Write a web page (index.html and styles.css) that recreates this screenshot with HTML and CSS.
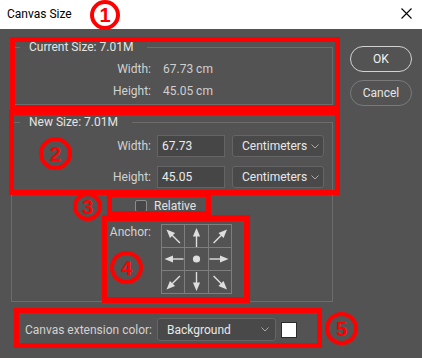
FILE: index.html
```html
<!DOCTYPE html>
<html>
<head>
<meta charset="utf-8">
<link rel="stylesheet" href="styles.css">
</head>
<body>
<div class="dialog">
  <header class="titlebar">
    <span class="title">Canvas Size</span>
    <svg class="close" width="11" height="11" viewBox="0 0 11 11"><path d="M0.5 0.5 L10.5 10.5 M10.5 0.5 L0.5 10.5" stroke="#000" stroke-width="1.1" fill="none"/></svg>
  </header>
  <main class="body">
    <div class="left">
      <fieldset class="group current">
        <legend>Current Size: 7.01M</legend>
        <div class="row"><span class="label">Width:</span><span class="value">67.73 cm</span></div>
        <div class="row"><span class="label">Height:</span><span class="value">45.05 cm</span></div>
      </fieldset>
      <fieldset class="group newsize">
        <legend>New Size: 7.01M</legend>
        <div class="row ctrl">
          <span class="label">Width:</span>
          <div class="input">67.73</div>
          <div class="select units"><span>Centimeters</span><svg class="chev" width="8" height="5" viewBox="0 0 8 5"><path d="M0.5 0.5 L4 4 L7.5 0.5" stroke="#a8a8a8" stroke-width="1" fill="none"/></svg></div>
        </div>
        <div class="row ctrl second">
          <span class="label">Height:</span>
          <div class="input">45.05</div>
          <div class="select units"><span>Centimeters</span><svg class="chev" width="8" height="5" viewBox="0 0 8 5"><path d="M0.5 0.5 L4 4 L7.5 0.5" stroke="#a8a8a8" stroke-width="1" fill="none"/></svg></div>
        </div>
        <div class="row check"><span class="box"></span><span class="checklabel">Relative</span></div>
        <div class="row anchor">
          <span class="label">Anchor:</span>
          <svg class="grid" width="71" height="70" viewBox="0 0 71 70">
            <g stroke="#7e7e7e" stroke-width="1" fill="none">
              <rect x="0.5" y="0.5" width="70" height="69"/>
              <path d="M23.5 0 V70 M47.5 0 V70 M0 23.5 H71 M0 46.5 H71"/>
            </g>
            <defs>
              <g id="arr">
                <path d="M0 0 L-3.6 8.5 L3.6 8.5 Z" fill="#dedede"/>
                <path d="M0 8 V19" stroke="#dedede" stroke-width="1.4"/>
              </g>
            </defs>
            <use href="#arr" transform="translate(35.5 4) rotate(0)"/>
            <use href="#arr" transform="translate(66 5.5) rotate(45)"/>
            <use href="#arr" transform="translate(67.5 35) rotate(90)"/>
            <use href="#arr" transform="translate(66 65.5) rotate(135)"/>
            <use href="#arr" transform="translate(35.5 67) rotate(180)"/>
            <use href="#arr" transform="translate(5.5 65.5) rotate(225)"/>
            <use href="#arr" transform="translate(3.5 35) rotate(270)"/>
            <use href="#arr" transform="translate(5.5 5.5) rotate(315)"/>
            <circle cx="35.5" cy="35" r="3.6" fill="#dedede"/>
          </svg>
        </div>
      </fieldset>
      <div class="row ext">
        <span class="label">Canvas extension color:</span>
        <div class="select bgsel"><span>Background</span><svg class="chev" width="8" height="5" viewBox="0 0 8 5"><path d="M0.5 0.5 L4 4 L7.5 0.5" stroke="#a8a8a8" stroke-width="1" fill="none"/></svg></div>
        <span class="swatch"></span>
      </div>
    </div>
    <div class="buttons">
      <button class="btn ok">OK</button>
      <button class="btn cancel">Cancel</button>
    </div>
  </main>

  <div class="mark m1"></div>
  <div class="mark m2"></div>
  <div class="mark m3"></div>
  <div class="mark m4"></div>
  <div class="mark m5"></div>
  <div class="num n1">1</div>
  <div class="num n2">2</div>
  <div class="num n3">3</div>
  <div class="num n4">4</div>
  <div class="num n5">5</div>
</div>
</body>
</html>
```

FILE: styles.css
```css
* { box-sizing: border-box; }
html, body { margin: 0; padding: 0; }
body {
  width: 422px;
  height: 358px;
  overflow: hidden;
  background: #535353;
  font-family: Roboto, "Liberation Sans", sans-serif;
  font-size: 12px;
  color: #d6d6d6;
}
.dialog {
  position: relative;
  width: 422px;
  height: 358px;
}
.titlebar {
  height: 29px;
  background: #ffffff;
  display: flex;
  align-items: center;
  justify-content: space-between;
  padding: 0 10px 1px 7px;
}
.title {
  color: #000;
  font-size: 12px;
}
.close { display: block; margin-bottom: 2px; }

.body {
  display: flex;
  align-items: flex-start;
}
.left {
  width: 333px;
  padding-left: 11px;
}
.group {
  margin: 0;
  padding: 0;
  width: 322px;
  border: 1px solid #6c6c6c;
  min-width: 0;
}
.group legend {
  margin-left: 8px;
  padding: 0 14px 0 9px;
  line-height: 14px;
  height: 14px;
  color: #e4e4e4;
  font-size: 12px;
}
.current {
  margin-top: 11px;
  padding-top: 4px;
  padding-bottom: 2px;
}
.newsize {
  margin-top: 10px;
  padding-top: 6px;
  padding-bottom: 8px;
}
.row {
  display: flex;
  align-items: center;
  height: 22px;
}
.label {
  width: 139px;
  text-align: right;
  color: #d2d2d2;
  flex: none;
}
.value {
  margin-left: 12px;
  color: #cfcfcf;
}
.ctrl.second { margin-top: 9px; }
.input {
  margin-left: 6px;
  width: 68px;
  height: 22px;
  background: #464646;
  border: 1px solid #646464;
  color: #ececec;
  padding-left: 4px;
  line-height: 20px;
}
.select {
  display: flex;
  align-items: center;
  justify-content: space-between;
  height: 22px;
  background: #494949;
  border: 1px solid #656565;
  border-radius: 3px;
  color: #e8e8e8;
  padding: 0 4px 0 9px;
}
.units {
  margin-left: 7px;
  width: 92px;
}
.chev { display: block; flex: none; }
.check {
  margin-top: 10px;
  height: 16px;
  padding-left: 123px;
}
.box {
  width: 12px;
  height: 12px;
  border: 1px solid #8c8c8c;
  border-radius: 2px;
  background: #474747;
  flex: none;
}
.checklabel {
  margin-left: 7px;
  color: #e2e2e2;
}
.anchor {
  margin-top: 10px;
  height: 69px;
  align-items: flex-start;
}
.anchor .label {
  line-height: 16px;
}
.grid {
  display: block;
  margin-left: 10px;
}
.ext {
  margin-top: 16px;
  height: 23px;
}
.ext .label {
  width: 141px;
}
.bgsel {
  margin-left: 5px;
  width: 119px;
  height: 23px;
  padding-right: 6px;
}
.swatch {
  margin-left: 5px;
  width: 16px;
  height: 16px;
  background: #ffffff;
  border: 1px solid #2b2b2b;
}

.buttons {
  margin-left: 17px;
  padding-top: 17px;
  display: flex;
  flex-direction: column;
  gap: 8px;
}
.btn {
  width: 62px;
  height: 26px;
  border-radius: 13px;
  background: transparent;
  font-family: Roboto, "Liberation Sans", sans-serif;
  font-size: 12px;
  padding: 0;
}
.ok {
  border: 1.5px solid #d2d2d2;
  color: #f2f2f2;
}
.cancel {
  border: 1px solid #7a7a7a;
  color: #e6e6e6;
}

/* annotation overlays */
.mark {
  position: absolute;
  border: 5px solid #ff0000;
}
.m1 { left: 10px; top: 37px; width: 330px; height: 73px; }
.m2 { left: 9px; top: 110px; width: 331px; height: 85px; }
.m3 { left: 107px; top: 192px; width: 104px; height: 24px; }
.m4 { left: 102px; top: 215px; width: 148px; height: 88px; border-width: 6px 6px 6px 5px; }
.m5 { left: 14px; top: 308px; width: 308px; height: 40px; }

.num {
  position: absolute;
  border: 4px solid #ff0000;
  border-radius: 50%;
  color: #ff0000;
  font-family: "Liberation Sans", Arial, sans-serif;
  font-weight: bold;
  font-size: 20px;
  display: flex;
  align-items: center;
  justify-content: center;
  line-height: 1;
}
.n1 { left: 90px; top: 0px; width: 30px; height: 30px; background: #fff; }
.n2 { left: 39px; top: 137px; width: 33px; height: 33px; }
.n3 { left: 73px; top: 192px; width: 29px; height: 29px; }
.n4 { left: 110px; top: 251px; width: 33px; height: 33px; }
.n5 { left: 325px; top: 312px; width: 33px; height: 33px; }
```
